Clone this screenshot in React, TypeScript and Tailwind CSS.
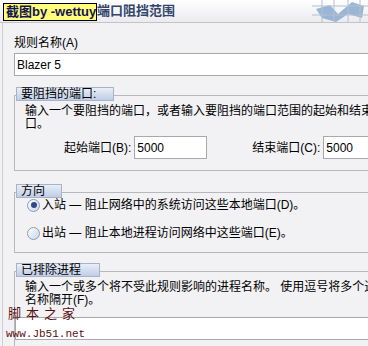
import React from 'react';

const font = { fontFamily: '"Liberation Sans", "Noto Sans CJK SC", sans-serif' };

const GroupTab: React.FC<{ label: string; width: string }> = ({ label, width }) => (
  <div
    className={`relative z-10 ml-[2px] h-[14px] ${width} border border-[#a9b3c6] bg-gradient-to-b from-[#e9eef8] to-[#bfcde6] pl-[4px] text-[12px] leading-[12px] text-black`}
  >
    {label}
  </div>
);

const Radio: React.FC<{ checked?: boolean; label: string }> = ({ checked, label }) => (
  <div className="flex items-center gap-[2px] h-[14px]">
    <span className="flex h-[13px] w-[13px] shrink-0 items-center justify-center rounded-full border border-[#8e9bb0] bg-gradient-to-br from-white to-[#c9d6ea]">
      {checked && <span className="h-[6px] w-[6px] rounded-full bg-[#2c4a86]" />}
    </span>
    <span className="text-[12px] leading-[14px] whitespace-nowrap">{label}</span>
  </div>
);

export default function App() {
  return (
    <div
      className="relative h-[346px] w-[368px] overflow-hidden bg-[#f2f1f4] text-black"
      style={font}
    >
      {/* title bar */}
      <div className="relative flex h-[23px] items-center border-b border-[#c4c4c8] bg-gradient-to-b from-white to-[#ebebee] pl-[97px]">
        <span className="text-[13px] font-bold text-[#33456a] whitespace-nowrap">端口阻挡范围</span>
        <svg className="absolute right-0 top-0" width="56" height="22" viewBox="0 0 56 22">
          <path d="M4 9 L18 5 L26 14 L40 2 L52 6 L50 18 L36 14 L24 22 L10 18 Z" fill="#8aaad0" opacity="0.85" />
          <path d="M0 6 H56 M0 15 H56 M10 0 V22 M22 0 V22 M36 0 V22 M48 0 V22" stroke="#b4c0d0" strokeWidth="1" />
        </svg>
        <div className="absolute left-[3px] top-[3px] flex h-[18px] w-[94px] items-center border border-black bg-[#ffff7a] pl-[2px]">
          <span className="text-[13px] font-bold leading-[14px] text-[#141452] whitespace-nowrap">截图by -wettuy</span>
        </div>
      </div>

      <div className="border-l border-[#d0d0d4] ml-[2px] h-full pl-[11px]">
        <div className="pt-[12px] text-[12px] leading-[16px]">规则名称(A)</div>
        <div className="mt-[2px] flex h-[23px] items-center border border-r-0 border-[#a8a8ae] bg-white pl-[2px] text-[12px]">
          Blazer 5
        </div>

        {/* group 1 */}
        <div className="mt-[11px]">
          <GroupTab label="要阻挡的端口:" width="w-[98px]" />
          <div className="-mt-[6px] h-[76px] border border-r-0 border-[#b8b8bc] pl-[10px] pt-[9px]">
            <div className="text-[12px] leading-[13px] whitespace-nowrap">
              输入一个要阻挡的端口，或者输入要阻挡的端口范围的起始和结束
            </div>
            <div className="text-[12px] leading-[13px]">口。</div>
            <div className="mt-[5px] flex items-center whitespace-nowrap">
              <span className="ml-[39px] shrink-0 text-[12px]">起始端口(B):</span>
              <div className="ml-[3px] flex h-[23px] w-[73px] shrink-0 items-center border border-[#a8a8ae] bg-white pl-[2px] text-[12px]">
                5000
              </div>
              <span className="ml-[45px] shrink-0 text-[12px]">结束端口(C):</span>
              <div className="ml-[3px] flex h-[23px] w-[60px] shrink-0 items-center border border-r-0 border-[#a8a8ae] bg-white pl-[2px] text-[12px]">
                5000
              </div>
            </div>
          </div>
        </div>

        {/* group 2 */}
        <div className="mt-[13px]">
          <GroupTab label="方向" width="w-[46px]" />
          <div className="-mt-[6px] h-[61px] border border-r-0 border-[#b8b8bc] pl-[12px] pt-[5px]">
            <Radio checked label="入站 — 阻止网络中的系统访问这些本地端口(D)。" />
            <div className="mt-[14px]">
              <Radio label="出站 — 阻止本地进程访问网络中这些端口(E)。" />
            </div>
          </div>
        </div>

        {/* group 3 */}
        <div className="mt-[10px]">
          <GroupTab label="已排除进程" width="w-[84px]" />
          <div className="-mt-[6px] h-[90px] border border-r-0 border-[#b8b8bc] pl-[10px] pt-[9px]">
            <div className="text-[12px] leading-[13px] whitespace-nowrap">
              输入一个或多个将不受此规则影响的进程名称。 使用逗号将多个进
            </div>
            <div className="text-[12px] leading-[13px]">名称隔开(F)。</div>
            <div className="-ml-[10px] mt-[10px] h-[23px] border border-r-0 border-[#a8a8ae] bg-white" />
          </div>
        </div>
      </div>

      {/* watermark */}
      <div className="absolute left-[8px] top-[307px] text-[13px] leading-[14px] tracking-[5px] text-[#5a1010]">
        脚本之家
      </div>
      <div
        className="absolute left-[6px] top-[327px] text-[11px] leading-[14px] text-[#5a1010]"
        style={{ fontFamily: '"Liberation Mono", monospace' }}
      >
        www.Jb51.net
      </div>
    </div>
  );
}
